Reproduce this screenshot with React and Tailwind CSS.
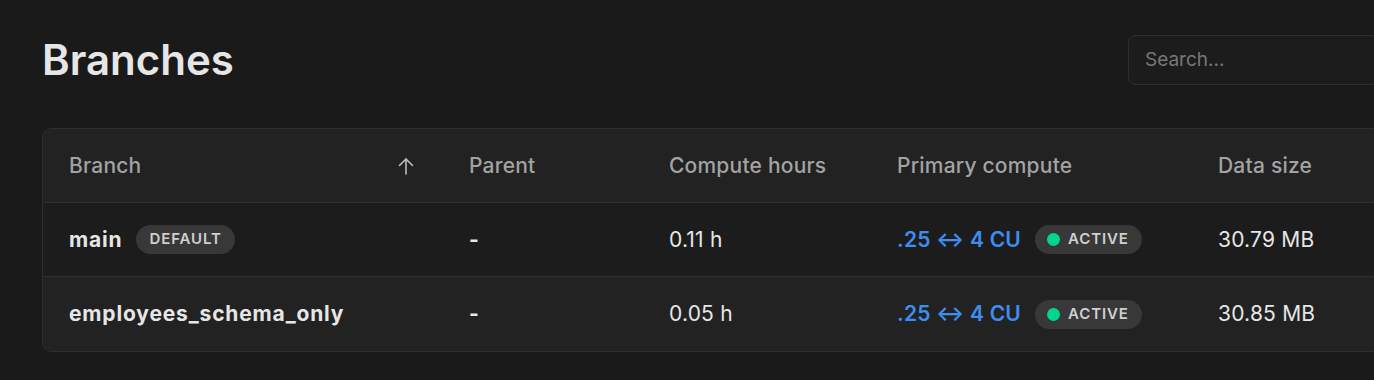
import React from "react";

const rows = [
  { name: "main", isDefault: true, parent: "-", hours: "0.11 h", size: "30.79 MB", hovered: true },
  { name: "employees_schema_only", isDefault: false, parent: "-", hours: "0.05 h", size: "30.85 MB", hovered: false },
];

function ActiveBadge() {
  return (
    <span className="inline-flex items-center gap-[8px] h-[29px] pl-[12px] pr-[13px] rounded-full bg-[#383838] text-[15px] font-semibold tracking-[0.06em] text-[#d0d0d0]">
      <span className="w-[13px] h-[13px] rounded-full bg-[#00d690]"></span>
      ACTIVE
    </span>
  );
}

export default function App() {
  return (
    <div
      className="h-[380px] w-full overflow-hidden bg-[#1a1a1a]"
      style={{ fontFamily: "Inter, 'Liberation Sans', sans-serif" }}
    >
      <div className="w-[1500px] px-[42px]">
        {/* Header */}
        <div className="flex justify-between pt-[35px] h-[128px] items-start">
          <h1 className="text-[42px] leading-[52px] font-semibold text-[#e6e6e6] mt-[-1px]">
            Branches
          </h1>
          <div className="w-[330px] h-[50px] rounded-lg border border-[#2e2e2e] bg-[#1c1c1c] flex items-center px-4 text-[19px] text-[#777777]">
            Search...
          </div>
        </div>

        {/* Table */}
        <div className="rounded-[10px] border border-[#2e2e2e] bg-[#222222] overflow-hidden text-[21px] tracking-[0.01em]">
          <div className="flex h-[74px] items-center text-[#a3a3a3] font-medium border-b border-[#2e2e2e]">
            <div className="w-[400px] pl-[26px] pr-[28px] flex items-center justify-between">
              <span>Branch</span>
              <svg width="18" height="20" viewBox="0 0 18 20" fill="none" stroke="#bdbdbd" strokeWidth="1.6" strokeLinecap="round" strokeLinejoin="round">
                <path d="M9 18V3" />
                <path d="M2.5 9.5L9 3l6.5 6.5" />
              </svg>
            </div>
            <div className="w-[200px] pl-[26px]">Parent</div>
            <div className="w-[228px] pl-[26px]">Compute hours</div>
            <div className="w-[321px] pl-[26px]">Primary compute</div>
            <div className="flex-1 pl-[26px]">Data size</div>
          </div>
          {rows.map((row, i) => (
            <div
              key={row.name}
              className={
                "flex items-center h-[74px] text-[#e6e6e6] " +
                (row.hovered ? "bg-[#1c1c1c] " : "") +
                (i < rows.length - 1 ? "border-b border-[#2e2e2e]" : "")
              }
            >
              <div className="w-[400px] pl-[26px] flex items-center gap-[14px]">
                <span className="font-bold tracking-[0.04em]">{row.name}</span>
                {row.isDefault && (
                  <span className="inline-flex items-center h-[29px] px-[13px] rounded-full bg-[#383838] text-[15px] font-semibold tracking-[0.06em] text-[#cfcfcf]">
                    DEFAULT
                  </span>
                )}
              </div>
              <div className="w-[200px] pl-[26px] font-bold">{row.parent}</div>
              <div className="w-[228px] pl-[26px]">{row.hours}</div>
              <div className="w-[321px] pl-[26px] flex items-center gap-[14px]">
                <span className="font-semibold text-[21px] text-[#3d8ef0]">.25 ↔ 4 CU</span>
                <ActiveBadge />
              </div>
              <div className="flex-1 pl-[26px]">{row.size}</div>
            </div>
          ))}
        </div>
      </div>
    </div>
  );
}
